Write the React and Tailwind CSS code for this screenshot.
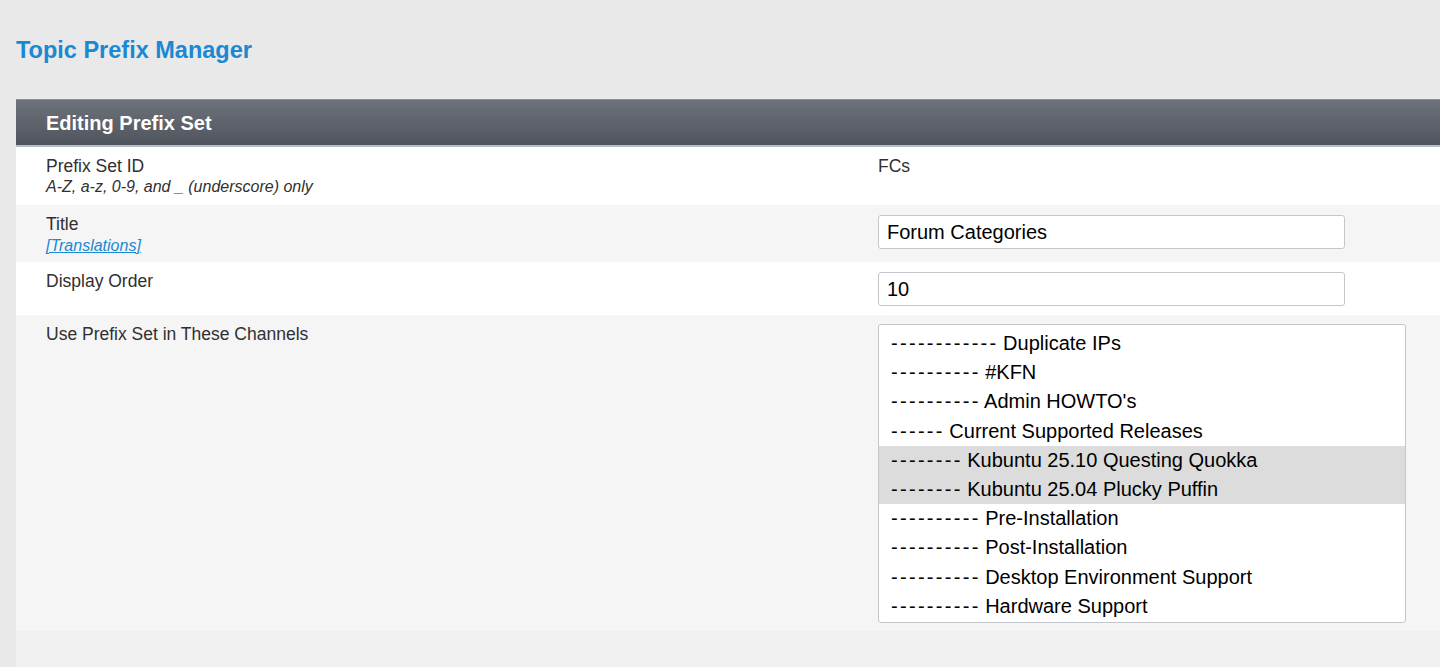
import React from "react";

const channels = [
  { dashes: "------------", name: "Duplicate IPs", selected: false },
  { dashes: "----------", name: "#KFN", selected: false },
  { dashes: "----------", name: "Admin HOWTO's", selected: false },
  { dashes: "------", name: "Current Supported Releases", selected: false },
  { dashes: "--------", name: "Kubuntu 25.10 Questing Quokka", selected: true },
  { dashes: "--------", name: "Kubuntu 25.04 Plucky Puffin", selected: true },
  { dashes: "----------", name: "Pre-Installation", selected: false },
  { dashes: "----------", name: "Post-Installation", selected: false },
  { dashes: "----------", name: "Desktop Environment Support", selected: false },
  { dashes: "----------", name: "Hardware Support", selected: false },
];

function Row({ bg, children, label, sub }) {
  return (
    <div className={`flex ${bg}`}>
      <div className="w-[862px] shrink-0 pl-[30px] pt-[9px]">
        <div className="text-[17.5px] leading-[20px] text-[#303030]">{label}</div>
        {sub}
      </div>
      <div className="flex-1">{children}</div>
    </div>
  );
}

export default function App() {
  return (
    <div
      className="min-h-[667px] bg-[#e9e9e9] pl-4"
      style={{ fontFamily: '"Liberation Sans", Arial, sans-serif' }}
    >
      <div className="h-[99px] flex items-center pt-[3px]">
        <h1 className="text-[23.5px] font-bold text-[#1a88d3]">Topic Prefix Manager</h1>
      </div>
      <div className="bg-[#f0f0f0] min-h-[568px]">
        <div className="h-[48px] border-t border-[#8b8f96] border-b-2 border-b-[#b8bdc8] bg-gradient-to-b from-[#6e727a] to-[#50545c] flex items-center pl-[30px] pt-[1px]">
          <span className="text-[20px] font-bold text-white">Editing Prefix Set</span>
        </div>

        <Row
          bg="bg-white h-[58px]"
          label="Prefix Set ID"
          sub={
            <div className="text-[16px] italic leading-[22px] text-[#303030]">
              A-Z, a-z, 0-9, and _ (underscore) only
            </div>
          }
        >
          <div className="pt-[9px] text-[17.5px] leading-[20px] text-[#303030]">FCs</div>
        </Row>

        <Row
          bg="bg-[#f5f5f5] h-[57px]"
          label="Title"
          sub={
            <a href="#" className="text-[16px] italic leading-[22px] text-[#1a88d3] underline">
              [Translations]
            </a>
          }
        >
          <div className="pt-[10px]">
            <input
              readOnly
              value="Forum Categories"
              className="w-[467px] h-[34px] rounded-[3px] border border-[#c3c6cc] bg-white px-[8px] text-[20px] text-black outline-none"
            />
          </div>
        </Row>

        <Row bg="bg-white h-[53px]" label="Display Order">
          <div className="pt-[10px]">
            <input
              readOnly
              value="10"
              className="w-[467px] h-[34px] rounded-[3px] border border-[#c3c6cc] bg-white px-[8px] text-[20px] text-black outline-none"
            />
          </div>
        </Row>

        <Row bg="bg-[#f5f5f5] h-[316px]" label="Use Prefix Set in These Channels">
          <div className="pt-[9px]">
            <div className="w-[528px] h-[299px] rounded-[3px] border border-[#c3c6cc] bg-white pt-[4px] overflow-hidden">
              {channels.map((c) => (
                <div
                  key={c.name}
                  className={`h-[29.2px] leading-[29px] pl-[12px] text-[20px] text-black whitespace-pre ${
                    c.selected ? "bg-[#dcdcdc]" : ""
                  }`}
                >
                  <span className="tracking-[2.3px]">{c.dashes}</span>
                  <span className="-ml-[1px]"> {c.name}</span>
                </div>
              ))}
            </div>
          </div>
        </Row>
      </div>
    </div>
  );
}
